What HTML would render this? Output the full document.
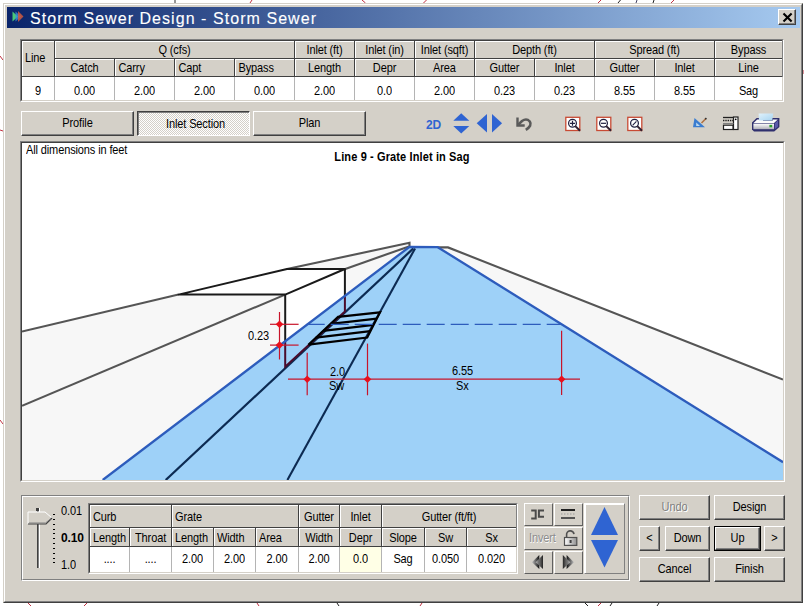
<!DOCTYPE html><html><head><meta charset="utf-8"><style>
*{box-sizing:border-box;margin:0;padding:0}
html,body{width:804px;height:606px;overflow:hidden;background:#fff;font-family:"Liberation Sans",sans-serif;font-size:11px;color:#000}
.a{position:absolute}
.t{position:absolute;white-space:nowrap;line-height:13px;letter-spacing:-0.12px;transform:scaleY(1.1);transform-origin:0 10.3px}
.btn{position:absolute;background:#d4d0c8;border-top:1px solid #fff;border-left:1px solid #fff;border-right:1px solid #404040;border-bottom:1px solid #404040;box-shadow:inset -1px -1px 0 #808080}
</style></head><body><svg class="a" style="left:0;top:0" width="804" height="606" viewBox="0 0 804 606"><g fill="none" stroke-width="1"><path d="M362 0 L365.5 3" stroke="#c03040"/><path d="M423.5 3 L426.5 0" stroke="#c03040"/><path d="M598 3 L601 0" stroke="#c03040"/><path d="M618 3 L620.5 0" stroke="#202020"/><path d="M636 3 L637 0" stroke="#404060"/><path d="M653 3 L654 0" stroke="#202020"/><path d="M671 3 L674 0" stroke="#c03040"/><path d="M250 3 L252 0" stroke="#c03040"/><path d="M175 0 V3" stroke="#303030"/><path d="M0 56 L3 60" stroke="#c03040"/><path d="M0 130 L3 131" stroke="#c03040"/><path d="M0 420 L3 424" stroke="#c03040"/><path d="M803 70 V74" stroke="#c03040"/><path d="M28 603 L31 606" stroke="#c03040"/><path d="M84 606 L87 603" stroke="#c03040"/><path d="M257 603 L259 606" stroke="#c03040"/><path d="M337 603 L339 606" stroke="#202020"/><path d="M420 606 L422 603" stroke="#c03040"/><path d="M585 603 L588 606" stroke="#202020"/><path d="M598 606 L601 603" stroke="#c03040"/><path d="M610 606 L612 603" stroke="#202020"/><path d="M657 606 L659 603" stroke="#202020"/></g></svg>
<div class="a" style="left:3px;top:3px;width:800px;height:600px;background:#d4d0c8;border-top:1px solid #d4d0c8;border-left:1px solid #d4d0c8;border-right:1px solid #404040;border-bottom:1px solid #404040"></div>
<div class="a" style="left:4px;top:4px;width:798px;height:598px;border-top:1px solid #fff;border-left:1px solid #fff;border-right:1px solid #808080;border-bottom:1px solid #808080"></div>
<div class="a" style="left:7px;top:7px;width:793px;height:21px;background:linear-gradient(to right,#0a246a,#a6caf0)"></div>
<div class="t" style="left:30px;top:10px;color:#fff;font-size:16px;letter-spacing:1.05px;line-height:18px;-webkit-text-stroke:0.12px #fff;transform:none">Storm Sewer Design - Storm Sewer</div>
<svg class="a" style="left:12px;top:11px" width="12" height="11" viewBox="0 0 12 11"><polygon points="0.5,0.5 6,5.5 0.5,10.5" fill="#48c878"/><polygon points="3.5,0.5 9,5.5 3.5,10.5" fill="#3a90d8" opacity="0.8"/><polygon points="6,0 11.5,5.5 6,11" fill="#d05a40" opacity="0.85"/></svg>
<div class="btn" style="left:778px;top:9px;width:18px;height:16px;"></div>
<svg class="a" style="left:782px;top:12px" width="11" height="11" viewBox="0 0 11 11"><path d="M1.5 1.5 L9.6 9.6 M9.6 1.5 L1.5 9.6" stroke="#000" stroke-width="2.1"/></svg>
<div class="a" style="left:20px;top:39px;width:764px;height:63px;background:#d4d0c8;border-top:1px solid #808080;border-left:1px solid #808080;border-right:1px solid #fff;border-bottom:1px solid #fff"></div>
<div class="a" style="left:21px;top:40px;width:762px;height:61px;border-top:1px solid #404040;border-left:1px solid #404040;border-right:1px solid #d4d0c8;border-bottom:1px solid #d4d0c8"></div>
<div class="a" style="left:22px;top:77px;width:760px;height:23px;background:#fff"></div>
<div class="a" style="left:54px;top:77px;width:1px;height:23px;background:#b4b4b4"></div>
<div class="a" style="left:114px;top:77px;width:1px;height:23px;background:#b4b4b4"></div>
<div class="a" style="left:174px;top:77px;width:1px;height:23px;background:#b4b4b4"></div>
<div class="a" style="left:234px;top:77px;width:1px;height:23px;background:#b4b4b4"></div>
<div class="a" style="left:294px;top:77px;width:1px;height:23px;background:#b4b4b4"></div>
<div class="a" style="left:354px;top:77px;width:1px;height:23px;background:#b4b4b4"></div>
<div class="a" style="left:414px;top:77px;width:1px;height:23px;background:#b4b4b4"></div>
<div class="a" style="left:474px;top:77px;width:1px;height:23px;background:#b4b4b4"></div>
<div class="a" style="left:534px;top:77px;width:1px;height:23px;background:#b4b4b4"></div>
<div class="a" style="left:594px;top:77px;width:1px;height:23px;background:#b4b4b4"></div>
<div class="a" style="left:654px;top:77px;width:1px;height:23px;background:#b4b4b4"></div>
<div class="a" style="left:714px;top:77px;width:1px;height:23px;background:#b4b4b4"></div>
<div class="a" style="left:22px;top:41px;width:32px;height:1px;background:#fff"></div>
<div class="a" style="left:22px;top:41px;width:1px;height:35px;background:#fff"></div>
<div class="a" style="left:54px;top:41px;width:1px;height:36px;background:#404040"></div>
<div class="a" style="left:22px;top:76px;width:32px;height:1px;background:#404040"></div>
<div class="t" style="left:25px;top:52px;">Line</div>
<div class="a" style="left:55px;top:41px;width:239px;height:1px;background:#fff"></div>
<div class="a" style="left:55px;top:41px;width:1px;height:17px;background:#fff"></div>
<div class="a" style="left:294px;top:41px;width:1px;height:18px;background:#404040"></div>
<div class="a" style="left:55px;top:58px;width:239px;height:1px;background:#404040"></div>
<div class="t" style="left:55px;top:44.3px;width:239px;text-align:center;">Q (cfs)</div>
<div class="a" style="left:295px;top:41px;width:59px;height:1px;background:#fff"></div>
<div class="a" style="left:295px;top:41px;width:1px;height:17px;background:#fff"></div>
<div class="a" style="left:354px;top:41px;width:1px;height:18px;background:#404040"></div>
<div class="a" style="left:295px;top:58px;width:59px;height:1px;background:#404040"></div>
<div class="t" style="left:295px;top:44.3px;width:59px;text-align:center;">Inlet (ft)</div>
<div class="a" style="left:355px;top:41px;width:59px;height:1px;background:#fff"></div>
<div class="a" style="left:355px;top:41px;width:1px;height:17px;background:#fff"></div>
<div class="a" style="left:414px;top:41px;width:1px;height:18px;background:#404040"></div>
<div class="a" style="left:355px;top:58px;width:59px;height:1px;background:#404040"></div>
<div class="t" style="left:355px;top:44.3px;width:59px;text-align:center;">Inlet (in)</div>
<div class="a" style="left:415px;top:41px;width:59px;height:1px;background:#fff"></div>
<div class="a" style="left:415px;top:41px;width:1px;height:17px;background:#fff"></div>
<div class="a" style="left:474px;top:41px;width:1px;height:18px;background:#404040"></div>
<div class="a" style="left:415px;top:58px;width:59px;height:1px;background:#404040"></div>
<div class="t" style="left:415px;top:44.3px;width:59px;text-align:center;">Inlet (sqft)</div>
<div class="a" style="left:475px;top:41px;width:119px;height:1px;background:#fff"></div>
<div class="a" style="left:475px;top:41px;width:1px;height:17px;background:#fff"></div>
<div class="a" style="left:594px;top:41px;width:1px;height:18px;background:#404040"></div>
<div class="a" style="left:475px;top:58px;width:119px;height:1px;background:#404040"></div>
<div class="t" style="left:475px;top:44.3px;width:119px;text-align:center;">Depth (ft)</div>
<div class="a" style="left:595px;top:41px;width:119px;height:1px;background:#fff"></div>
<div class="a" style="left:595px;top:41px;width:1px;height:17px;background:#fff"></div>
<div class="a" style="left:714px;top:41px;width:1px;height:18px;background:#404040"></div>
<div class="a" style="left:595px;top:58px;width:119px;height:1px;background:#404040"></div>
<div class="t" style="left:595px;top:44.3px;width:119px;text-align:center;">Spread (ft)</div>
<div class="a" style="left:715px;top:41px;width:67px;height:1px;background:#fff"></div>
<div class="a" style="left:715px;top:41px;width:1px;height:17px;background:#fff"></div>
<div class="a" style="left:782px;top:41px;width:1px;height:18px;background:#808080"></div>
<div class="a" style="left:715px;top:58px;width:67px;height:1px;background:#404040"></div>
<div class="t" style="left:715px;top:44.3px;width:67px;text-align:center;">Bypass</div>
<div class="a" style="left:55px;top:59px;width:59px;height:1px;background:#fff"></div>
<div class="a" style="left:55px;top:59px;width:1px;height:17px;background:#fff"></div>
<div class="a" style="left:114px;top:59px;width:1px;height:18px;background:#404040"></div>
<div class="a" style="left:55px;top:76px;width:59px;height:1px;background:#404040"></div>
<div class="t" style="left:55px;top:62px;width:59px;text-align:center;">Catch</div>
<div class="a" style="left:115px;top:59px;width:59px;height:1px;background:#fff"></div>
<div class="a" style="left:115px;top:59px;width:1px;height:17px;background:#fff"></div>
<div class="a" style="left:174px;top:59px;width:1px;height:18px;background:#404040"></div>
<div class="a" style="left:115px;top:76px;width:59px;height:1px;background:#404040"></div>
<div class="t" style="left:118.5px;top:62px;">Carry</div>
<div class="a" style="left:175px;top:59px;width:59px;height:1px;background:#fff"></div>
<div class="a" style="left:175px;top:59px;width:1px;height:17px;background:#fff"></div>
<div class="a" style="left:234px;top:59px;width:1px;height:18px;background:#404040"></div>
<div class="a" style="left:175px;top:76px;width:59px;height:1px;background:#404040"></div>
<div class="t" style="left:178.5px;top:62px;">Capt</div>
<div class="a" style="left:235px;top:59px;width:59px;height:1px;background:#fff"></div>
<div class="a" style="left:235px;top:59px;width:1px;height:17px;background:#fff"></div>
<div class="a" style="left:294px;top:59px;width:1px;height:18px;background:#404040"></div>
<div class="a" style="left:235px;top:76px;width:59px;height:1px;background:#404040"></div>
<div class="t" style="left:238.5px;top:62px;">Bypass</div>
<div class="a" style="left:295px;top:59px;width:59px;height:1px;background:#fff"></div>
<div class="a" style="left:295px;top:59px;width:1px;height:17px;background:#fff"></div>
<div class="a" style="left:354px;top:59px;width:1px;height:18px;background:#404040"></div>
<div class="a" style="left:295px;top:76px;width:59px;height:1px;background:#404040"></div>
<div class="t" style="left:295px;top:62px;width:59px;text-align:center;">Length</div>
<div class="a" style="left:355px;top:59px;width:59px;height:1px;background:#fff"></div>
<div class="a" style="left:355px;top:59px;width:1px;height:17px;background:#fff"></div>
<div class="a" style="left:414px;top:59px;width:1px;height:18px;background:#404040"></div>
<div class="a" style="left:355px;top:76px;width:59px;height:1px;background:#404040"></div>
<div class="t" style="left:355px;top:62px;width:59px;text-align:center;">Depr</div>
<div class="a" style="left:415px;top:59px;width:59px;height:1px;background:#fff"></div>
<div class="a" style="left:415px;top:59px;width:1px;height:17px;background:#fff"></div>
<div class="a" style="left:474px;top:59px;width:1px;height:18px;background:#404040"></div>
<div class="a" style="left:415px;top:76px;width:59px;height:1px;background:#404040"></div>
<div class="t" style="left:415px;top:62px;width:59px;text-align:center;">Area</div>
<div class="a" style="left:475px;top:59px;width:59px;height:1px;background:#fff"></div>
<div class="a" style="left:475px;top:59px;width:1px;height:17px;background:#fff"></div>
<div class="a" style="left:534px;top:59px;width:1px;height:18px;background:#404040"></div>
<div class="a" style="left:475px;top:76px;width:59px;height:1px;background:#404040"></div>
<div class="t" style="left:475px;top:62px;width:59px;text-align:center;">Gutter</div>
<div class="a" style="left:535px;top:59px;width:59px;height:1px;background:#fff"></div>
<div class="a" style="left:535px;top:59px;width:1px;height:17px;background:#fff"></div>
<div class="a" style="left:594px;top:59px;width:1px;height:18px;background:#404040"></div>
<div class="a" style="left:535px;top:76px;width:59px;height:1px;background:#404040"></div>
<div class="t" style="left:535px;top:62px;width:59px;text-align:center;">Inlet</div>
<div class="a" style="left:595px;top:59px;width:59px;height:1px;background:#fff"></div>
<div class="a" style="left:595px;top:59px;width:1px;height:17px;background:#fff"></div>
<div class="a" style="left:654px;top:59px;width:1px;height:18px;background:#404040"></div>
<div class="a" style="left:595px;top:76px;width:59px;height:1px;background:#404040"></div>
<div class="t" style="left:595px;top:62px;width:59px;text-align:center;">Gutter</div>
<div class="a" style="left:655px;top:59px;width:59px;height:1px;background:#fff"></div>
<div class="a" style="left:655px;top:59px;width:1px;height:17px;background:#fff"></div>
<div class="a" style="left:714px;top:59px;width:1px;height:18px;background:#404040"></div>
<div class="a" style="left:655px;top:76px;width:59px;height:1px;background:#404040"></div>
<div class="t" style="left:655px;top:62px;width:59px;text-align:center;">Inlet</div>
<div class="a" style="left:715px;top:59px;width:67px;height:1px;background:#fff"></div>
<div class="a" style="left:715px;top:59px;width:1px;height:17px;background:#fff"></div>
<div class="a" style="left:782px;top:59px;width:1px;height:18px;background:#808080"></div>
<div class="a" style="left:715px;top:76px;width:67px;height:1px;background:#404040"></div>
<div class="t" style="left:715px;top:62px;width:67px;text-align:center;">Line</div>
<div class="t" style="left:22px;top:84.8px;width:32px;text-align:center;">9</div>
<div class="t" style="left:55px;top:84.8px;width:59px;text-align:center;">0.00</div>
<div class="t" style="left:115px;top:84.8px;width:59px;text-align:center;">2.00</div>
<div class="t" style="left:175px;top:84.8px;width:59px;text-align:center;">2.00</div>
<div class="t" style="left:235px;top:84.8px;width:59px;text-align:center;">0.00</div>
<div class="t" style="left:295px;top:84.8px;width:59px;text-align:center;">2.00</div>
<div class="t" style="left:355px;top:84.8px;width:59px;text-align:center;">0.0</div>
<div class="t" style="left:415px;top:84.8px;width:59px;text-align:center;">2.00</div>
<div class="t" style="left:475px;top:84.8px;width:59px;text-align:center;">0.23</div>
<div class="t" style="left:535px;top:84.8px;width:59px;text-align:center;">0.23</div>
<div class="t" style="left:595px;top:84.8px;width:59px;text-align:center;">8.55</div>
<div class="t" style="left:655px;top:84.8px;width:59px;text-align:center;">8.55</div>
<div class="t" style="left:715px;top:84.8px;width:67px;text-align:center;">Sag</div>
<div class="btn" style="left:21px;top:111px;width:113px;height:25px;"></div>
<div class="t" style="left:21px;top:117px;width:113px;text-align:center;top:117px">Profile</div>
<div class="a" style="left:137px;top:111px;width:113px;height:25px;border-top:1px solid #404040;border-left:1px solid #404040;border-right:1px solid #fff;border-bottom:1px solid #fff;box-shadow:inset 1px 1px 0 #808080;background-color:#e8e6e2;background-image:repeating-conic-gradient(#fff 0 25%,#d4d0c8 0 50%);background-size:2px 2px"></div>
<div class="t" style="left:139px;top:118px;width:113px;text-align:center;">Inlet Section</div>
<div class="btn" style="left:253px;top:111px;width:113px;height:25px;"></div>
<div class="t" style="left:253px;top:117px;width:113px;text-align:center;top:117px">Plan</div>
<div class="a" style="left:20px;top:141px;width:765px;height:341px;background:#fff;border-top:1px solid #808080;border-left:1px solid #808080;border-right:1px solid #fff;border-bottom:1px solid #fff"></div>
<div class="a" style="left:21px;top:142px;width:763px;height:339px;border-top:1px solid #404040;border-left:1px solid #404040;border-right:1px solid #d4d0c8;border-bottom:1px solid #d4d0c8"></div>
<svg class="a" style="left:0;top:0" width="804" height="606" viewBox="0 0 804 606"><defs><clipPath id="cp"><rect x="22" y="143" width="761" height="337"/></clipPath></defs><g clip-path="url(#cp)"><polygon points="22,331.6 409.5,242.8 409.5,247 102.7,480 22,480" fill="#f7f7f7"/><polygon points="437.8,247.4 448,247.4 783,379.6 783,462.2" fill="#f7f7f7"/><polygon points="178.5,294.6 287,269 344.9,269 285.2,294.6" fill="#fff"/><polygon points="285.2,294.6 344.9,269 344.9,296 285.2,341" fill="#fff"/><polygon points="409.5,246.8 437.8,247.2 783,462.2 783,480 102.7,480" fill="#9ed1f8"/><polyline points="22,331.6 178.5,294.6" fill="none" stroke="#555555" stroke-width="2.1"/><polyline points="287,269 409.5,242.8 409.5,247" fill="none" stroke="#555555" stroke-width="2.1"/><polyline points="22,405.8 285.2,294.6" fill="none" stroke="#555555" stroke-width="2.1"/><polyline points="344.6,269.2 409,246.4" fill="none" stroke="#555555" stroke-width="2.1"/><polyline points="437.8,247.4 448,247.4 783,379.6" fill="none" stroke="#555555" stroke-width="2.1"/><line x1="165.7" y1="480" x2="413.4" y2="248.4" stroke="#0c2a52" stroke-width="2.2"/><line x1="287.4" y1="480" x2="415.1" y2="248.4" stroke="#0c2a52" stroke-width="2.1"/><path d="M178.5,294.6 L285.2,294.6 L344.9,269 L287,269 Z" fill="none" stroke="#1a1a1a" stroke-width="2" stroke-linejoin="round"/><line x1="285.2" y1="294.3" x2="285.2" y2="341" stroke="#1a1a1a" stroke-width="2"/><line x1="344.9" y1="269" x2="344.9" y2="296" stroke="#1a1a1a" stroke-width="2"/><polyline points="285.2,341 285.2,366.8 344.9,311.6 344.9,296" fill="none" stroke="#4a0c2c" stroke-width="2"/><polyline points="102.7,480 409.5,246.8 437.8,247.2 783,462.2" fill="none" stroke="#2d5cbc" stroke-width="2.3" stroke-linejoin="round"/><polyline points="308.4,344.7 338.1,316.8 380,312.3 367.2,337.5 308.4,344.7" fill="none" stroke="#000" stroke-width="2.2" stroke-linejoin="miter"/><line x1="315.8" y1="337.7" x2="370.4" y2="331.2" stroke="#000" stroke-width="2.2"/><line x1="323.2" y1="330.8" x2="373.6" y2="324.9" stroke="#000" stroke-width="2.2"/><line x1="330.7" y1="323.8" x2="376.8" y2="318.6" stroke="#000" stroke-width="2.2"/><line x1="306.7" y1="324.4" x2="561.5" y2="324.4" stroke="#2d5cbc" stroke-width="1.2" stroke-dasharray="18 6"/><g stroke="#c8142a" stroke-width="1.2" fill="none"><line x1="279.5" y1="312" x2="279.5" y2="359.5"/><line x1="270" y1="324.3" x2="298.6" y2="324.3"/><line x1="270" y1="345.1" x2="298.6" y2="345.1"/><line x1="288" y1="379.2" x2="580" y2="379.2"/><line x1="307.2" y1="352.7" x2="307.2" y2="395.3"/><line x1="367.5" y1="343.6" x2="367.5" y2="395.3"/><line x1="561.6" y1="330.8" x2="561.6" y2="395"/></g><polygon points="275.7,324.3 279.5,320.5 283.3,324.3 279.5,328.1" fill="#e8101c"/><polygon points="275.7,345.1 279.5,341.3 283.3,345.1 279.5,348.90000000000003" fill="#e8101c"/><polygon points="303.4,379.2 307.2,375.4 311.0,379.2 307.2,383.0" fill="#e8101c"/><polygon points="363.7,379.2 367.5,375.4 371.3,379.2 367.5,383.0" fill="#e8101c"/><polygon points="557.8000000000001,379.2 561.6,375.4 565.4,379.2 561.6,383.0" fill="#e8101c"/></g></svg>
<div class="t" style="left:26px;top:144px;">All dimensions in feet</div>
<div class="t" style="left:301px;top:151px;width:202px;text-align:center;font-weight:bold;letter-spacing:0.12px">Line 9 - Grate Inlet in Sag</div>
<div class="t" style="left:248px;top:330px;">0.23</div>
<div class="t" style="left:330px;top:366px;">2.0</div>
<div class="t" style="left:329px;top:380px;">Sw</div>
<div class="t" style="left:452px;top:365px;">6.55</div>
<div class="t" style="left:456px;top:380px;">Sx</div>
<div class="a" style="left:21px;top:495px;width:609px;height:86px;border-top:1px solid #808080;border-left:1px solid #808080;border-right:1px solid #fff;border-bottom:1px solid #fff"></div>
<div class="a" style="left:22px;top:496px;width:607px;height:84px;border-top:1px solid #fff;border-left:1px solid #fff;border-right:1px solid #808080;border-bottom:1px solid #808080"></div>
<div class="a" style="left:88px;top:503px;width:430px;height:71px;background:#d4d0c8;border-top:1px solid #808080;border-left:1px solid #808080;border-right:1px solid #fff;border-bottom:1px solid #fff"></div>
<div class="a" style="left:89px;top:504px;width:428px;height:69px;border-top:1px solid #404040;border-left:1px solid #404040;border-right:1px solid #d4d0c8;border-bottom:1px solid #d4d0c8"></div>
<div class="a" style="left:90px;top:547px;width:426px;height:25px;background:#fff"></div>
<div class="a" style="left:340px;top:547px;width:41px;height:25px;background:#ffffe6"></div>
<div class="a" style="left:129px;top:547px;width:1px;height:25px;background:#b4b4b4"></div>
<div class="a" style="left:171px;top:547px;width:1px;height:25px;background:#b4b4b4"></div>
<div class="a" style="left:213px;top:547px;width:1px;height:25px;background:#b4b4b4"></div>
<div class="a" style="left:255px;top:547px;width:1px;height:25px;background:#b4b4b4"></div>
<div class="a" style="left:298px;top:547px;width:1px;height:25px;background:#b4b4b4"></div>
<div class="a" style="left:339px;top:547px;width:1px;height:25px;background:#b4b4b4"></div>
<div class="a" style="left:381px;top:547px;width:1px;height:25px;background:#b4b4b4"></div>
<div class="a" style="left:424px;top:547px;width:1px;height:25px;background:#b4b4b4"></div>
<div class="a" style="left:466px;top:547px;width:1px;height:25px;background:#b4b4b4"></div>
<div class="a" style="left:90px;top:505px;width:81px;height:1px;background:#fff"></div>
<div class="a" style="left:90px;top:505px;width:1px;height:22px;background:#fff"></div>
<div class="a" style="left:171px;top:505px;width:1px;height:23px;background:#404040"></div>
<div class="a" style="left:90px;top:527px;width:81px;height:1px;background:#404040"></div>
<div class="t" style="left:93px;top:511px;">Curb</div>
<div class="a" style="left:172px;top:505px;width:126px;height:1px;background:#fff"></div>
<div class="a" style="left:172px;top:505px;width:1px;height:22px;background:#fff"></div>
<div class="a" style="left:298px;top:505px;width:1px;height:23px;background:#404040"></div>
<div class="a" style="left:172px;top:527px;width:126px;height:1px;background:#404040"></div>
<div class="t" style="left:175px;top:511px;">Grate</div>
<div class="a" style="left:299px;top:505px;width:40px;height:1px;background:#fff"></div>
<div class="a" style="left:299px;top:505px;width:1px;height:22px;background:#fff"></div>
<div class="a" style="left:339px;top:505px;width:1px;height:23px;background:#404040"></div>
<div class="a" style="left:299px;top:527px;width:40px;height:1px;background:#404040"></div>
<div class="t" style="left:299px;top:511px;width:40px;text-align:center;">Gutter</div>
<div class="a" style="left:340px;top:505px;width:41px;height:1px;background:#fff"></div>
<div class="a" style="left:340px;top:505px;width:1px;height:22px;background:#fff"></div>
<div class="a" style="left:381px;top:505px;width:1px;height:23px;background:#404040"></div>
<div class="a" style="left:340px;top:527px;width:41px;height:1px;background:#404040"></div>
<div class="t" style="left:340px;top:511px;width:41px;text-align:center;">Inlet</div>
<div class="a" style="left:382px;top:505px;width:134px;height:1px;background:#fff"></div>
<div class="a" style="left:382px;top:505px;width:1px;height:22px;background:#fff"></div>
<div class="a" style="left:516px;top:505px;width:1px;height:23px;background:#808080"></div>
<div class="a" style="left:382px;top:527px;width:134px;height:1px;background:#404040"></div>
<div class="t" style="left:382px;top:511px;width:134px;text-align:center;">Gutter (ft/ft)</div>
<div class="a" style="left:90px;top:528px;width:39px;height:1px;background:#fff"></div>
<div class="a" style="left:90px;top:528px;width:1px;height:18px;background:#fff"></div>
<div class="a" style="left:129px;top:528px;width:1px;height:19px;background:#404040"></div>
<div class="a" style="left:90px;top:546px;width:39px;height:1px;background:#404040"></div>
<div class="t" style="left:93px;top:532px;">Length</div>
<div class="a" style="left:130px;top:528px;width:41px;height:1px;background:#fff"></div>
<div class="a" style="left:130px;top:528px;width:1px;height:18px;background:#fff"></div>
<div class="a" style="left:171px;top:528px;width:1px;height:19px;background:#404040"></div>
<div class="a" style="left:130px;top:546px;width:41px;height:1px;background:#404040"></div>
<div class="t" style="left:135px;top:532px;">Throat</div>
<div class="a" style="left:172px;top:528px;width:41px;height:1px;background:#fff"></div>
<div class="a" style="left:172px;top:528px;width:1px;height:18px;background:#fff"></div>
<div class="a" style="left:213px;top:528px;width:1px;height:19px;background:#404040"></div>
<div class="a" style="left:172px;top:546px;width:41px;height:1px;background:#404040"></div>
<div class="t" style="left:175px;top:532px;">Length</div>
<div class="a" style="left:214px;top:528px;width:41px;height:1px;background:#fff"></div>
<div class="a" style="left:214px;top:528px;width:1px;height:18px;background:#fff"></div>
<div class="a" style="left:255px;top:528px;width:1px;height:19px;background:#404040"></div>
<div class="a" style="left:214px;top:546px;width:41px;height:1px;background:#404040"></div>
<div class="t" style="left:217px;top:532px;">Width</div>
<div class="a" style="left:256px;top:528px;width:42px;height:1px;background:#fff"></div>
<div class="a" style="left:256px;top:528px;width:1px;height:18px;background:#fff"></div>
<div class="a" style="left:298px;top:528px;width:1px;height:19px;background:#404040"></div>
<div class="a" style="left:256px;top:546px;width:42px;height:1px;background:#404040"></div>
<div class="t" style="left:259px;top:532px;">Area</div>
<div class="a" style="left:299px;top:528px;width:40px;height:1px;background:#fff"></div>
<div class="a" style="left:299px;top:528px;width:1px;height:18px;background:#fff"></div>
<div class="a" style="left:339px;top:528px;width:1px;height:19px;background:#404040"></div>
<div class="a" style="left:299px;top:546px;width:40px;height:1px;background:#404040"></div>
<div class="t" style="left:299px;top:532px;width:40px;text-align:center;">Width</div>
<div class="a" style="left:340px;top:528px;width:41px;height:1px;background:#fff"></div>
<div class="a" style="left:340px;top:528px;width:1px;height:18px;background:#fff"></div>
<div class="a" style="left:381px;top:528px;width:1px;height:19px;background:#404040"></div>
<div class="a" style="left:340px;top:546px;width:41px;height:1px;background:#404040"></div>
<div class="t" style="left:340px;top:532px;width:41px;text-align:center;">Depr</div>
<div class="a" style="left:382px;top:528px;width:42px;height:1px;background:#fff"></div>
<div class="a" style="left:382px;top:528px;width:1px;height:18px;background:#fff"></div>
<div class="a" style="left:424px;top:528px;width:1px;height:19px;background:#404040"></div>
<div class="a" style="left:382px;top:546px;width:42px;height:1px;background:#404040"></div>
<div class="t" style="left:382px;top:532px;width:42px;text-align:center;">Slope</div>
<div class="a" style="left:425px;top:528px;width:41px;height:1px;background:#fff"></div>
<div class="a" style="left:425px;top:528px;width:1px;height:18px;background:#fff"></div>
<div class="a" style="left:466px;top:528px;width:1px;height:19px;background:#404040"></div>
<div class="a" style="left:425px;top:546px;width:41px;height:1px;background:#404040"></div>
<div class="t" style="left:425px;top:532px;width:41px;text-align:center;">Sw</div>
<div class="a" style="left:467px;top:528px;width:49px;height:1px;background:#fff"></div>
<div class="a" style="left:467px;top:528px;width:1px;height:18px;background:#fff"></div>
<div class="a" style="left:516px;top:528px;width:1px;height:19px;background:#808080"></div>
<div class="a" style="left:467px;top:546px;width:49px;height:1px;background:#404040"></div>
<div class="t" style="left:467px;top:532px;width:49px;text-align:center;">Sx</div>
<div class="t" style="left:90px;top:553px;width:39px;text-align:center;">....</div>
<div class="t" style="left:130px;top:553px;width:41px;text-align:center;">....</div>
<div class="t" style="left:172px;top:553px;width:41px;text-align:center;">2.00</div>
<div class="t" style="left:214px;top:553px;width:41px;text-align:center;">2.00</div>
<div class="t" style="left:256px;top:553px;width:42px;text-align:center;">2.00</div>
<div class="t" style="left:299px;top:553px;width:40px;text-align:center;">2.00</div>
<div class="t" style="left:340px;top:553px;width:41px;text-align:center;">0.0</div>
<div class="t" style="left:382px;top:553px;width:42px;text-align:center;">Sag</div>
<div class="t" style="left:425px;top:553px;width:41px;text-align:center;">0.050</div>
<div class="t" style="left:467px;top:553px;width:49px;text-align:center;">0.020</div>
<div class="a" style="left:37px;top:508px;width:2px;height:60px;background:#808080"></div>
<div class="a" style="left:37px;top:508px;width:1px;height:60px;background:#404040"></div>
<div class="a" style="left:39px;top:508px;width:1px;height:60px;background:#fff"></div>
<svg class="a" style="left:27px;top:511px" width="27" height="15" viewBox="0 0 27 15"><polygon points="1,1 18,1 25,7 19,13 1,13" fill="#d4d0c8"/><polyline points="1,13 1,1 18,1" fill="none" stroke="#fff" stroke-width="1"/><polyline points="18,1 25,7" fill="none" stroke="#fff" stroke-width="1"/><polyline points="25,7 19,13 1,13" fill="none" stroke="#404040" stroke-width="1.2"/><polyline points="24,7.5 18.5,12 2,12" fill="none" stroke="#808080" stroke-width="1"/></svg>
<div class="a" style="left:36px;top:508px;width:3px;height:3px;background:#404040"></div>
<div class="a" style="left:53px;top:514px;width:2px;height:1px;background:#000"></div>
<div class="a" style="left:53px;top:519px;width:2px;height:1px;background:#000"></div>
<div class="a" style="left:53px;top:524px;width:2px;height:1px;background:#000"></div>
<div class="a" style="left:53px;top:529px;width:2px;height:1px;background:#000"></div>
<div class="a" style="left:53px;top:533px;width:2px;height:1px;background:#000"></div>
<div class="a" style="left:53px;top:538px;width:2px;height:1px;background:#000"></div>
<div class="a" style="left:53px;top:543px;width:2px;height:1px;background:#000"></div>
<div class="a" style="left:53px;top:548px;width:2px;height:1px;background:#000"></div>
<div class="a" style="left:53px;top:553px;width:2px;height:1px;background:#000"></div>
<div class="a" style="left:53px;top:558px;width:2px;height:1px;background:#000"></div>
<div class="a" style="left:53px;top:562px;width:2px;height:1px;background:#000"></div>
<div class="t" style="left:61px;top:505px;">0.01</div>
<div class="t" style="left:61px;top:532px;font-weight:bold;font-size:12px">0.10</div>
<div class="t" style="left:61px;top:559px;">1.0</div>
<div class="a" style="left:524px;top:503px;width:29px;height:23px;background:#d4d0c8;border-top:1px solid #fff;border-left:1px solid #fff;border-right:1px solid #606060;border-bottom:1px solid #606060"></div>
<div class="a" style="left:554px;top:503px;width:29px;height:23px;background:#d4d0c8;border-top:1px solid #fff;border-left:1px solid #fff;border-right:1px solid #606060;border-bottom:1px solid #606060"></div>
<div class="a" style="left:524px;top:527px;width:59px;height:23px;background:#d4d0c8;border-top:1px solid #fff;border-left:1px solid #fff;border-right:1px solid #606060;border-bottom:1px solid #606060"></div>
<div class="t" style="left:529px;top:531.5px;color:#8c8c8c;text-shadow:0.5px 0.5px 0 #fff">Invert</div>
<div class="a" style="left:524px;top:551px;width:29px;height:23px;background:#d4d0c8;border-top:1px solid #fff;border-left:1px solid #fff;border-right:1px solid #606060;border-bottom:1px solid #606060"></div>
<div class="a" style="left:554px;top:551px;width:29px;height:23px;background:#d4d0c8;border-top:1px solid #fff;border-left:1px solid #fff;border-right:1px solid #606060;border-bottom:1px solid #606060"></div>
<svg class="a" style="left:522px;top:500px" width="64" height="76" viewBox="0 0 64 76"><defs><linearGradient id="gl" x1="0" x2="1"><stop offset="0" stop-color="#c0c0c0"/><stop offset="1" stop-color="#101010"/></linearGradient><linearGradient id="gr" x1="1" x2="0"><stop offset="0" stop-color="#c0c0c0"/><stop offset="1" stop-color="#101010"/></linearGradient><linearGradient id="glk" x1="0" x2="1"><stop offset="0" stop-color="#ffffff"/><stop offset="1" stop-color="#909090"/></linearGradient></defs><path d="M9.2 10.6 H13.7 V18.6 H9.2" fill="none" stroke="#4a4a4a" stroke-width="2"/><path d="M22 10.6 H16.9 V16.8 H22" fill="none" stroke="#4a4a4a" stroke-width="2"/><path d="M39 10 H53" stroke="#202020" stroke-width="2"/><path d="M39 18 H53" stroke="#555" stroke-width="2"/><path d="M39 14 H53" stroke="#9a9a9a" stroke-width="1" stroke-dasharray="1.5 1.5"/><path d="M44.6 37.5 V35 A3.6 3.6 0 0 1 52 34.2" fill="none" stroke="#505050" stroke-width="1.6"/><rect x="42.5" y="37.5" width="12.3" height="7.9" fill="url(#glk)" stroke="#505050" stroke-width="1.2"/><rect x="47.6" y="40" width="2" height="3" fill="#404040"/><polygon points="9.9,62.3 17.3,54.9 17.3,68.9" fill="url(#gl)"/><polygon points="13.5,62.3 21,54.9 21,68.9" fill="url(#gl)" opacity="0.9"/><polygon points="52,62.3 44.6,54.9 44.6,68.9" fill="url(#gr)"/><polygon points="48.4,62.3 40.8,54.9 40.8,68.9" fill="url(#gr)" opacity="0.9"/></svg>
<div class="a" style="left:584px;top:503px;width:41px;height:71px;border:1px solid #fff;border-right-color:#808080;border-bottom-color:#808080;box-shadow:inset 1px 1px 0 #fff, inset -1px -1px 0 #d4d0c8"></div>
<svg class="a" style="left:584px;top:503px" width="41" height="71" viewBox="0 0 41 71"><polygon points="20.5,4 34,32 7,32" fill="#2f64d2"/><polygon points="7,37 34,37 20.5,64.5" fill="#2f64d2"/></svg>
<div class="t" style="left:426px;top:119px;color:#2f64d2;font-weight:bold;font-size:12px">2D</div>
<svg class="a" style="left:450px;top:110px" width="90" height="28" viewBox="0 0 90 28"><polygon points="11.2,3.2 19.3,10.7 3.3,10.7" fill="#2f64d2"/><polygon points="3.3,15.9 19.3,15.9 11.2,23.4" fill="#2f64d2"/><polygon points="26.7,13.3 37,4 37,22.6" fill="#2f64d2"/><polygon points="52.1,13.3 42,4 42,22.6" fill="#2f64d2"/><path d="M67.5 7.5 V15.5 H74.7" fill="none" stroke="#5a5a5a" stroke-width="2.4"/><path d="M68.3 14.7 L72 11 Q76.5 7.8 79.8 11.5 Q82.5 15.5 75.8 19.8" fill="none" stroke="#5a5a5a" stroke-width="2.6"/></svg>
<svg class="a" style="left:565px;top:116px" width="20" height="20" viewBox="0 0 20 20"><rect x="0.8" y="1.3" width="14" height="13.2" fill="#fff" stroke="#c84a34" stroke-width="1.3"/><circle cx="7.5" cy="7.3" r="3.9" fill="none" stroke="#202040" stroke-width="1.25"/><path d="M5 7.3 H10 M7.5 4.8 V9.8" stroke="#202040" stroke-width="1.2"/><path d="M10.3 10.1 L15 14.8" stroke="#302030" stroke-width="2"/></svg>
<svg class="a" style="left:596px;top:116px" width="20" height="20" viewBox="0 0 20 20"><rect x="0.8" y="1.3" width="14" height="13.2" fill="#fff" stroke="#c84a34" stroke-width="1.3"/><circle cx="7.5" cy="7.3" r="3.9" fill="none" stroke="#202040" stroke-width="1.25"/><path d="M5 7.3 H10" stroke="#202040" stroke-width="1.2"/><path d="M10.3 10.1 L15 14.8" stroke="#302030" stroke-width="2"/></svg>
<svg class="a" style="left:627px;top:116px" width="20" height="20" viewBox="0 0 20 20"><rect x="0.8" y="1.3" width="14" height="13.2" fill="#fff" stroke="#c84a34" stroke-width="1.3"/><circle cx="7.5" cy="7.3" r="3.9" fill="none" stroke="#202040" stroke-width="1.25"/><path d="M5.6 9.3 L9.4 5.3" stroke="#202040" stroke-width="1.1"/><path d="M10.3 10.1 L15 14.8" stroke="#302030" stroke-width="2"/></svg>
<svg class="a" style="left:690px;top:114px" width="20" height="18" viewBox="0 0 20 18"><polygon points="4.5,4 15,13.3 3,13.3" fill="#3a7cd0"/><polygon points="6.2,8.5 10,12 6.2,12" fill="#b8d8f0"/><path d="M11.5 9 L16 4.5" stroke="#b07040" stroke-width="1.6"/><path d="M15.2 5.3 L16.4 4.1" stroke="#303030" stroke-width="1.6"/></svg>
<svg class="a" style="left:722px;top:116px" width="18" height="16" viewBox="0 0 18 16"><rect x="11.5" y="1" width="4.5" height="12.5" fill="#fff" stroke="#202020" stroke-width="1.2"/><path d="M1 1.5 H11.5" stroke="#202020" stroke-width="1.3"/><path d="M1 4.5 H11" stroke="#202020" stroke-width="1.6" stroke-dasharray="1.4 0.9"/><circle cx="13.7" cy="3.3" r="0.9" fill="#000"/><path d="M1 7.5 H11.5" stroke="#808080" stroke-width="1"/><rect x="1.5" y="9.2" width="9.5" height="4.3" fill="#fff" stroke="#202020" stroke-width="1.2"/></svg>
<svg class="a" style="left:746px;top:108px" width="40" height="28" viewBox="0 0 40 28"><defs><linearGradient id="pf" x1="0" y1="0" x2="0" y2="1"><stop offset="0" stop-color="#ffffff"/><stop offset="1" stop-color="#b0b0b8"/></linearGradient><linearGradient id="pp" x1="0" y1="0" x2="1" y2="1"><stop offset="0" stop-color="#e0f2fc"/><stop offset="1" stop-color="#a8d4f0"/></linearGradient></defs><polygon points="6,14.6 10.6,10 33.4,10 33.4,19 28.2,23.4 8,23.4 6,21.4" fill="#30306e"/><polygon points="7.6,15 11.2,11.6 17,11.6 17,12.8 26.6,12.8 26.6,11.6 31.8,11.6 28,15" fill="#fbfbfb"/><polygon points="12.6,5.5 27.2,5.5 26.2,12.6 13,12.6" fill="url(#pp)"/><rect x="7.4" y="15.6" width="20.6" height="5.6" fill="url(#pf)"/><polygon points="28.8,15.2 32,12.3 32,18.5 28.8,21.3" fill="#5a5aa8"/><rect x="23.4" y="16.9" width="2.8" height="2.4" fill="#28a028"/></svg>
<div class="btn" style="left:639px;top:495px;width:71px;height:25px;"></div>
<div class="t" style="left:639px;top:501px;width:71px;text-align:center;color:#808080;text-shadow:1px 1px 0 #fff">Undo</div>
<div class="btn" style="left:714px;top:495px;width:71px;height:25px;"></div>
<div class="t" style="left:714px;top:501px;width:71px;text-align:center;">Design</div>
<div class="btn" style="left:639px;top:526px;width:21px;height:25px;"></div>
<div class="t" style="left:639px;top:532px;width:21px;text-align:center;">&lt;</div>
<div class="btn" style="left:665px;top:526px;width:45px;height:25px;"></div>
<div class="t" style="left:665px;top:532px;width:45px;text-align:center;">Down</div>
<div class="a" style="left:714px;top:526px;width:47px;height:25px;border:1px solid #000"></div>
<div class="btn" style="left:715px;top:527px;width:45px;height:23px;"></div>
<div class="t" style="left:715px;top:532px;width:45px;text-align:center;">Up</div>
<div class="btn" style="left:764px;top:526px;width:21px;height:25px;"></div>
<div class="t" style="left:764px;top:532px;width:21px;text-align:center;">&gt;</div>
<div class="btn" style="left:639px;top:557px;width:71px;height:25px;"></div>
<div class="t" style="left:639px;top:563px;width:71px;text-align:center;">Cancel</div>
<div class="btn" style="left:714px;top:557px;width:71px;height:25px;"></div>
<div class="t" style="left:714px;top:563px;width:71px;text-align:center;">Finish</div></body></html>
